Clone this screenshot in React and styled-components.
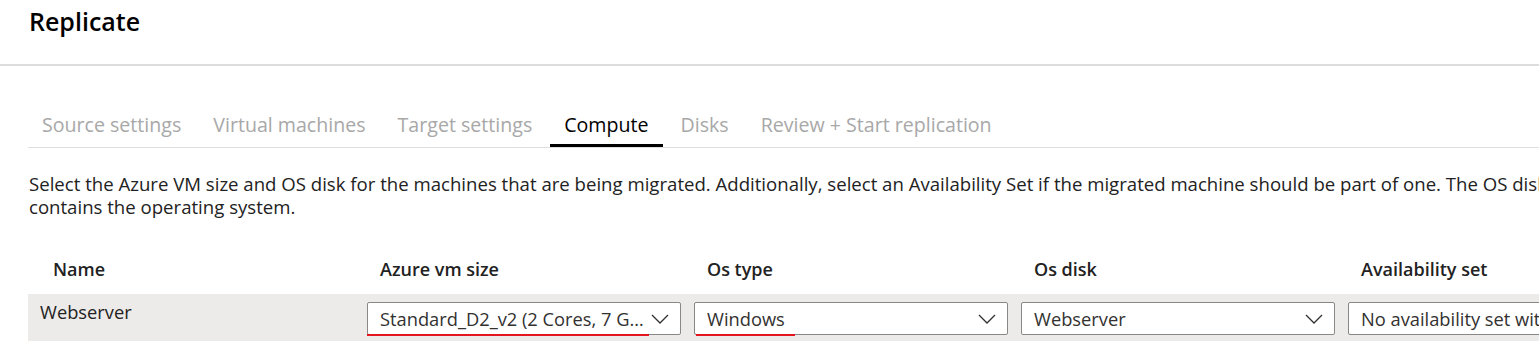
import styled, { createGlobalStyle } from "styled-components";

const GlobalStyle = createGlobalStyle`
  html, body {
    margin: 0;
    padding: 0;
    background: #fff;
    overflow: hidden;
  }
  body {
    font-family: "Open Sans", "Noto Sans", "DejaVu Sans", sans-serif;
    color: #1b1a19;
  }
`;

const Page = styled.div`
  width: 1800px;
`;

const Header = styled.header`
  height: 66px;
  border-bottom: 2px solid #dddddd;
  padding: 5px 0 0 29px;
  box-sizing: border-box;
`;

const Title = styled.h1`
  margin: 0;
  font-size: 25px;
  line-height: 32px;
  font-weight: 600;
  color: #000;
`;

const Content = styled.main`
  padding: 37px 0 0 28px;
`;

const Tabs = styled.nav`
  display: flex;
  gap: 4px;
  border-bottom: 1px solid #dedede;
`;

const Tab = styled.div`
  position: relative;
  padding: 0 14px;
  height: 44px;
  line-height: 44px;
  font-size: 19.6px;
  color: ${({ $active }) => ($active ? "#000" : "#a8a8a8")};

  &::after {
    content: "";
    display: ${({ $active }) => ($active ? "block" : "none")};
    position: absolute;
    left: 0;
    right: 0;
    bottom: 0;
    height: 3px;
    background: #000;
  }
`;

const Description = styled.p`
  margin: 24px 0 0 1px;
  font-size: 18.6px;
  line-height: 23px;
  color: #222;
  white-space: nowrap;
`;

const Table = styled.div`
  margin-top: 27px;
`;

const Row = styled.div`
  display: flex;
  height: ${({ $head }) => ($head ? "49px" : "47px")};
  align-items: ${({ $head }) => ($head ? "center" : "flex-start")};
  background: ${({ $head }) => ($head ? "transparent" : "#edebe9")};
`;

const NameCell = styled.div`
  width: 339px;
  flex: none;
  box-sizing: border-box;
  padding: ${({ $head }) => ($head ? "0 0 0 25px" : "6px 0 0 12px")};
  font-size: ${({ $head }) => ($head ? "18px" : "18.3px")};
  line-height: 23px;
  font-weight: ${({ $head }) => ($head ? 600 : 400)};
  color: #222;
`;

const Cell = styled.div`
  width: 327px;
  flex: none;
  box-sizing: border-box;
  padding: ${({ $head }) => ($head ? "0 0 0 13px" : "8px 0 0 0")};
  font-size: 18px;
  line-height: 23px;
  font-weight: ${({ $head }) => ($head ? 600 : 400)};
  color: #222;
`;

const Select = styled.div`
  position: relative;
  width: 314px;
  height: 33px;
  box-sizing: border-box;
  border: 1px solid #8a8886;
  border-radius: 2px;
  background: #fff;
  display: flex;
  align-items: center;
  padding: 0 11px 0 12px;
  gap: 3px;
`;

const Value = styled.span`
  flex: 1;
  min-width: 0;
  font-size: 18.3px;
  line-height: 23px;
  color: #323130;
  white-space: nowrap;
  overflow: hidden;
  text-overflow: ellipsis;
`;

const Mark = styled.span`
  position: absolute;
  left: ${({ $left }) => $left}px;
  bottom: -2px;
  width: ${({ $width }) => $width}px;
  height: 2px;
  background: #e3151e;
`;

const Chevron = () => (
  <svg width="18" height="10" viewBox="0 0 18 10" style={{ flex: "none" }}>
    <path d="M1 1 L9 9 L17 1" fill="none" stroke="#323130" strokeWidth="1.3" />
  </svg>
);

const Dropdown = ({ value, mark }) => (
  <Select>
    <Value>{value}</Value>
    <Chevron />
    {mark && <Mark $left={mark[0]} $width={mark[1]} />}
  </Select>
);

const tabs = [
  "Source settings",
  "Virtual machines",
  "Target settings",
  "Compute",
  "Disks",
  "Review + Start replication",
];

export default function App() {
  return (
    <Page>
      <GlobalStyle />
      <Header>
        <Title>Replicate</Title>
      </Header>
      <Content>
        <Tabs>
          {tabs.map((t) => (
            <Tab key={t} $active={t === "Compute"}>
              {t}
            </Tab>
          ))}
        </Tabs>
        <Description>
          Select the Azure VM size and OS disk for the machines that are being
          migrated. Additionally, select an Availability Set if the migrated
          machine should be part of one. The OS disk
          <br />
          contains the operating system.
        </Description>
        <Table>
          <Row $head>
            <NameCell $head>Name</NameCell>
            <Cell $head>Azure vm size</Cell>
            <Cell $head>Os type</Cell>
            <Cell $head>Os disk</Cell>
            <Cell $head>Availability set</Cell>
          </Row>
          <Row>
            <NameCell>Webserver</NameCell>
            <Cell>
              <Dropdown value="Standard_D2_v2 (2 Cores, 7 G…" mark={[-1, 282]} />
            </Cell>
            <Cell>
              <Dropdown value="Windows" mark={[1, 99]} />
            </Cell>
            <Cell>
              <Dropdown value="Webserver" />
            </Cell>
            <Cell>
              <Dropdown value="No availability set with this name" />
            </Cell>
          </Row>
        </Table>
      </Content>
    </Page>
  );
}
